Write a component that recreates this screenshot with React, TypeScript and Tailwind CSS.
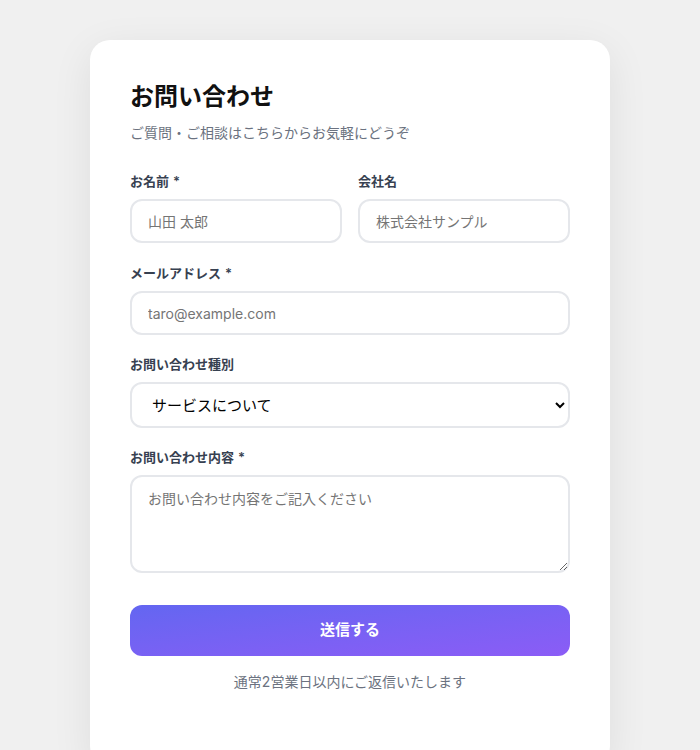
import React from "react";

const font = { fontFamily: 'Inter, "Noto Sans CJK JP", sans-serif' };

function Label({ children, required }: { children: React.ReactNode; required?: boolean }) {
  return (
    <label className="block mb-2 text-[13px] leading-5 font-semibold text-[#374151]">
      {children}
      {required && <span className="ml-1">*</span>}
    </label>
  );
}

const inputCls =
  "block w-full h-11 px-4 border-2 border-[#e5e7eb] rounded-xl bg-white text-[14px] text-[#111827] placeholder:text-[#757575] outline-none";

export default function App() {
  return (
    <div className="min-h-screen bg-[#f0f0f0] pt-10 px-[90px] pb-4" style={font}>
      <div className="bg-white rounded-[20px] shadow-[0_10px_40px_rgba(0,0,0,0.08)] px-10 pt-10 pb-[74px]">
        <h1 className="text-[24px] leading-8 font-bold text-[#111111] mt-[1px]">お問い合わせ</h1>
        <p className="mt-[10px] text-[14px] leading-5 text-[#6b7280]">ご質問・ご相談はこちらからお気軽にどうぞ</p>

        <div className="mt-[28px] grid grid-cols-2 gap-4 mb-5">
          <div>
            <Label required>お名前</Label>
            <input className={inputCls} placeholder="山田 太郎" />
          </div>
          <div>
            <Label>会社名</Label>
            <input className={inputCls} placeholder="株式会社サンプル" />
          </div>
        </div>

        <div className="mb-[19px]">
          <Label required>メールアドレス</Label>
          <input className={inputCls} placeholder="taro@example.com" />
        </div>

        <div className="mb-[19px]">
          <Label>お問い合わせ種別</Label>
          <select className="block w-full h-[46px] px-4 border-2 border-[#e5e7eb] rounded-xl bg-white text-[15px] text-black outline-none" defaultValue="service">
            <option value="service">サービスについて</option>
            <option value="price">料金について</option>
            <option value="other">その他</option>
          </select>
        </div>

        <div>
          <Label required>お問い合わせ内容</Label>
          <textarea
            className="block w-full h-[98px] px-4 py-3 border-2 border-[#e5e7eb] rounded-xl bg-white text-[14px] leading-5 text-[#111827] placeholder:text-[#757575] outline-none resize-y"
            placeholder="お問い合わせ内容をご記入ください"
          />
        </div>

        <button className="mt-8 w-full h-[51px] rounded-xl bg-gradient-to-br from-[#6366f1] to-[#8b5cf6] text-white text-[15px] font-bold">
          送信する
        </button>

        <p className="mt-4 text-center text-[14px] leading-5 text-[#6b7280]">通常2営業日以内にご返信いたします</p>
      </div>
    </div>
  );
}
